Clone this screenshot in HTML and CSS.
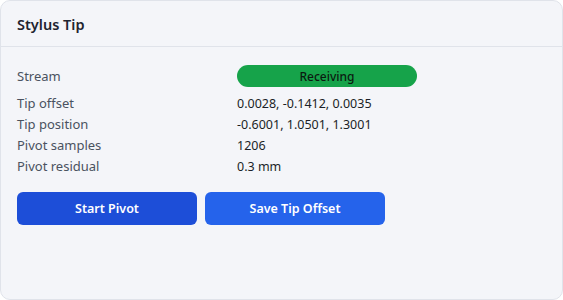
FILE: index.html
```html
<!DOCTYPE html>
<html>
<head>
<meta charset="utf-8">
<link rel="stylesheet" href="styles.css">
</head>
<body>
<div class="card">
  <div class="card-header">
    <h2 class="title">Stylus Tip</h2>
  </div>
  <div class="card-body">
    <div class="rows">
      <div class="row row-stream">
        <span class="label">Stream</span>
        <span class="value"><span class="pill">Receiving</span></span>
      </div>
      <div class="row">
        <span class="label">Tip offset</span>
        <span class="value">0.0028, -0.1412, 0.0035</span>
      </div>
      <div class="row">
        <span class="label">Tip position</span>
        <span class="value">-0.6001, 1.0501, 1.3001</span>
      </div>
      <div class="row">
        <span class="label">Pivot samples</span>
        <span class="value">1206</span>
      </div>
      <div class="row">
        <span class="label">Pivot residual</span>
        <span class="value">0.3 mm</span>
      </div>
    </div>
    <div class="actions">
      <button class="btn btn-dark">Start Pivot</button>
      <button class="btn btn-light">Save Tip Offset</button>
    </div>
  </div>
</div>
</body>
</html>
```

FILE: styles.css
```css
* { box-sizing: border-box; }
html, body {
  margin: 0;
  padding: 0;
  background: #ffffff;
}
body {
  font-family: "Noto Sans", "Open Sans", "Liberation Sans", sans-serif;
  width: 563px;
  height: 300px;
}
.card {
  width: 563px;
  height: 300px;
  background: #f4f5f9;
  border: 1px solid #e0e3ea;
  border-radius: 10px;
  display: flex;
  flex-direction: column;
}
.card-header {
  height: 46px;
  border-bottom: 1px solid #e0e3ea;
  display: flex;
  align-items: center;
  padding: 0 16px;
}
.title {
  margin: 0;
  font-size: 14.5px;
  font-weight: 600;
  color: #1f2430;
}
.card-body {
  padding: 18px 16px 0 16px;
}
.rows {
  display: flex;
  flex-direction: column;
  gap: 2px;
}
.row {
  display: grid;
  grid-template-columns: 220px 180px;
  align-items: baseline;
  line-height: 19px;
}
.row-stream {
  margin-bottom: 5px;
}
.label {
  color: #4a5260;
  font-size: 13px;
}
.value {
  color: #1b1f27;
  font-size: 12.5px;
}
.pill {
  display: flex;
  align-items: center;
  justify-content: center;
  height: 22px;
  width: 180px;
  border-radius: 11px;
  background: #16a34a;
  color: #0b1a10;
  font-weight: 500;
  font-size: 12px;
}
.actions {
  display: flex;
  gap: 8px;
  margin-top: 16px;
}
.btn {
  width: 180px;
  height: 33px;
  border: none;
  border-radius: 6px;
  color: #ffffff;
  font-family: inherit;
  font-size: 12.5px;
  font-weight: 600;
}
.btn-dark { background: #1d4ed8; }
.btn-light { background: #2563eb; }
```
